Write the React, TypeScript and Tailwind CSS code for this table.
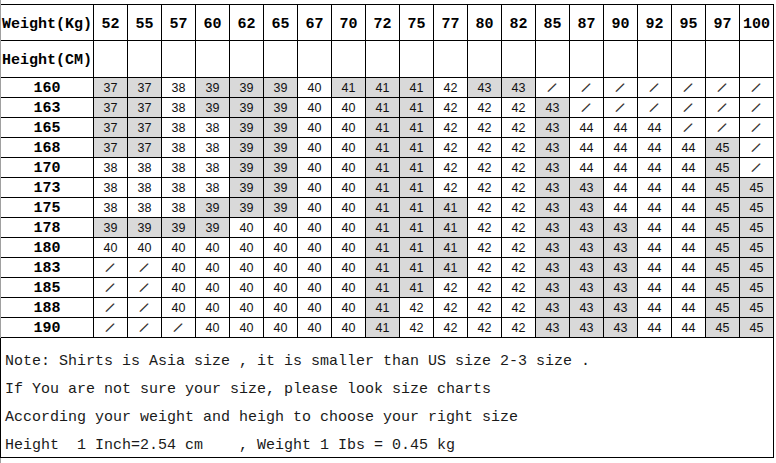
import React from "react";

const cols = [52, 55, 57, 60, 62, 65, 67, 70, 72, 75, 77, 80, 82, 85, 87, 90, 92, 95, 97, 100];

const rows: [number, string][] = [
  [160, "37g 37g 38 39g 39g 39g 40 41g 41g 41g 42 43g 43g / / / / / / /"],
  [163, "37g 37g 38 39g 39g 39g 40 40 41g 41g 42 42 42 43g / / / / / /"],
  [165, "37g 37g 38 38 39g 39g 40 40 41g 41g 42 42 42 43g 44 44 44 / / /"],
  [168, "37g 37g 38 38 39g 39g 40 40 41g 41g 42 42 42 43g 44 44 44 44 45g /"],
  [170, "38 38 38 38 39g 39g 40 40 41g 41g 42 42 42 43g 44 44 44 44 45g /"],
  [173, "38 38 38 38 39g 39g 40 40 41g 41g 42 42 42 43g 43g 44 44 44 45g 45g"],
  [175, "38 38 38 39g 39g 39g 40 40 41g 41g 41g 42 42 43g 43g 44 44 44 45g 45g"],
  [178, "39g 39g 39g 39g 40 40 40 40 41g 41g 41g 42 42 43g 43g 43g 44 44 45g 45g"],
  [180, "40 40 40 40 40 40 40 40 41g 41g 41g 42 42 43g 43g 43g 44 44 45g 45g"],
  [183, "/ / 40 40 40 40 40 40 41g 41g 41g 42 42 43g 43g 43g 44 44 45g 45g"],
  [185, "/ / 40 40 40 40 40 40 41g 41g 42 42 42 43g 43g 43g 44 44 45g 45g"],
  [188, "/ / 40 40 40 40 40 40 41g 42 42 42 42 43g 43g 43g 44 44 45g 45g"],
  [190, "/ / / 40 40 40 40 40 41g 42 42 42 42 43g 43g 43g 44 44 45g 45g"],
];

const head = "font-['Liberation_Mono',monospace] font-bold text-[15px] text-black leading-none";

function DataCell({ v }: { v: string }) {
  const gray = v.endsWith("g");
  const val = gray ? v.slice(0, -1) : v;
  return (
    <div
      className={`flex items-center justify-center border-r border-b border-black ${
        gray ? "bg-[#d9d9d9]" : "bg-white"
      }`}
    >
      {val === "/" ? (
        <span className="inline-block rotate-[30deg] font-['Liberation_Sans',sans-serif] text-[15px] leading-none text-[#333]">
          /
        </span>
      ) : (
        <span className="font-['Liberation_Sans',sans-serif] text-[12.5px] leading-none text-[#111] pt-[1px]">
          {val}
        </span>
      )}
    </div>
  );
}

export default function App() {
  return (
    <div className="w-[776px] h-[463px] bg-white overflow-hidden">
      <div className="h-full border-l border-[#a0a0a0] pt-[4px] w-[774px]">
        <div className="grid grid-cols-[93px_repeat(20,34px)] grid-rows-[36px_37px_repeat(13,20px)] border-t border-black">
          {/* header row 1 */}
          <div className={`flex items-center pl-[1px] pt-[4px] border-r border-b border-black ${head} text-[14.5px]`}>
            Weight(Kg)
          </div>
          {cols.map((c) => (
            <div
              key={c}
              className={`flex items-center justify-center pt-[4px] border-r border-b border-black ${head}`}
            >
              {c}
            </div>
          ))}
          {/* header row 2 */}
          <div className={`flex items-center pl-[1px] pt-[2px] border-r border-b border-black ${head} text-[14.5px]`}>
            Height(CM)
          </div>
          {cols.map((c) => (
            <div key={`e${c}`} className="border-r border-b border-black" />
          ))}
          {/* data rows */}
          {rows.map(([h, s]) => (
            <React.Fragment key={h}>
              <div className={`flex items-center justify-center pt-[1px] border-r border-b border-black ${head}`}>
                {h}
              </div>
              {s.split(" ").map((v, i) => (
                <DataCell key={i} v={v} />
              ))}
            </React.Fragment>
          ))}
        </div>
        <div className="-ml-[1px] h-[120px] border-l border-r border-b border-black pl-[4px] pt-[10px] font-['Liberation_Mono',monospace] text-[15px] leading-[28px] text-[#1a1a1a] whitespace-pre">
          <div>Note: Shirts is Asia size , it is smaller than US size 2-3 size .</div>
          <div>If You are not sure your size, please look size charts</div>
          <div>According your weight and heigh to choose your right size</div>
          <div>Height  1 Inch=2.54 cm    , Weight 1 Ibs = 0.45 kg</div>
        </div>
      </div>
    </div>
  );
}
